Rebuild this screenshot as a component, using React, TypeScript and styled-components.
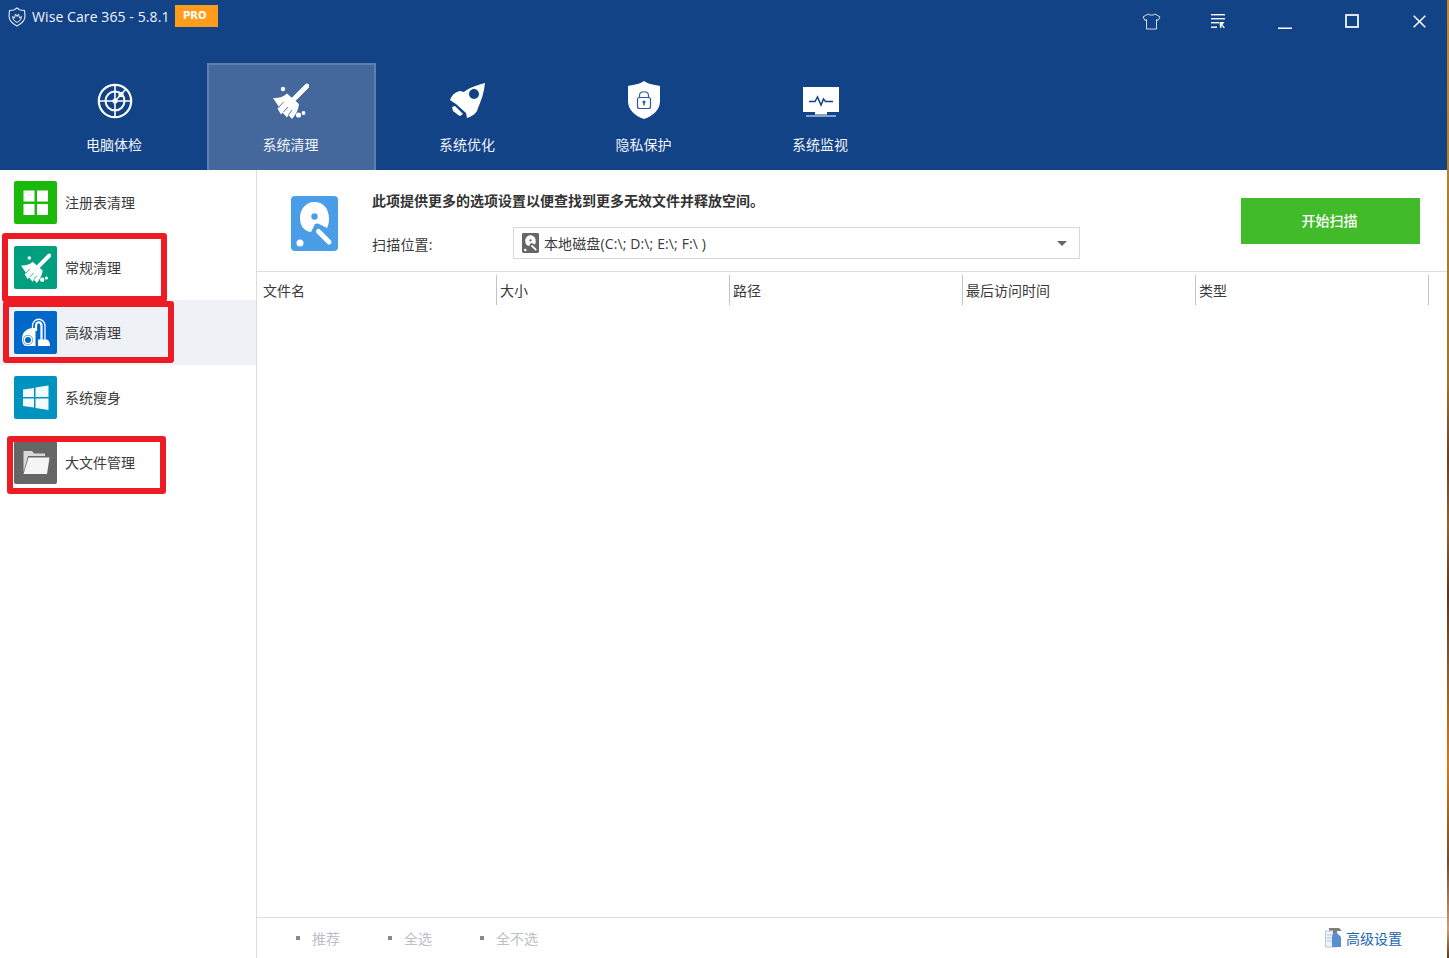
import React from "react";
import styled, { createGlobalStyle } from "styled-components";

const Global = createGlobalStyle`
  html, body { margin: 0; padding: 0; background: #fff; overflow: hidden; }
  #root { width: 1449px; height: 958px; }
  * { box-sizing: border-box; }
`;

const CJK = `"Open Sans", "Noto Sans CJK SC", sans-serif`;

const Desktop = styled.div`
  display: flex;
  width: 1449px;
  height: 958px;
  position: relative;
  font-family: ${CJK};
`;
const Wallpaper = styled.div`
  width: 2px;
  height: 958px;
  background: linear-gradient(180deg, #c08a2c 0%, #a5702a 40%, #6a3d24 48%, #9a6028 55%, #5a3322 62%, #8f5a26 70%, #d17c1e 80%, #7a4a22 90%, #d09a78 97%, #5a3a1e 100%);
`;
const Win = styled.div`
  width: 1447px;
  height: 958px;
  display: flex;
  flex-direction: column;
`;
const Header = styled.header`
  height: 170px;
  background: #134387;
  display: flex;
  flex-direction: column;
`;
const TitleBar = styled.div`
  height: 63px;
  display: flex;
  align-items: flex-start;
  justify-content: space-between;
  padding: 5px 18px 0 8px;
`;
const TitleLeft = styled.div`
  display: flex;
  align-items: flex-start;
`;
const LogoWrap = styled.div`
  padding-top: 2px;
  display: flex;
`;
const AppName = styled.span`
  color: #f1f4f9;
  font-size: 14px;
  line-height: 22px;
  padding-top: 1px;
  margin-left: 6px;
  width: 138px;
  white-space: nowrap;
  letter-spacing: 0.09px;
`;
const Pro = styled.span`
  width: 43px;
  height: 22px;
  margin-left: 5px;
  background: #ff9c1a;
  color: #fff;
  font-family: "DejaVu Sans", sans-serif;
  font-size: 10px;
  font-weight: 700;
  line-height: 22px;
  padding-left: 8px;
`;
const WinControls = styled.div`
  display: flex;
  gap: 47px;
  padding-top: 6px;
`;
const WinButton = styled.div`
  width: 20px;
  height: 20px;
  display: flex;
  align-items: center;
  justify-content: center;
`;
const Tabs = styled.nav`
  display: flex;
  gap: 7.5px;
  padding-left: 30px;
  height: 107px;
`;
const Tab = styled.div<{ $active?: boolean }>`
  width: 169px;
  height: 107px;
  display: flex;
  flex-direction: column;
  align-items: center;
  border: 2px solid ${(p) => (p.$active ? "#6080ac" : "transparent")};
  border-bottom: 0;
  background: ${(p) => (p.$active ? "#44689c" : "transparent")};
`;
const TabIcon = styled.div`
  height: 54px;
  width: 100%;
  display: flex;
  align-items: flex-end;
  justify-content: center;
`;
const TabLabel = styled.span`
  margin-top: 16px;
  margin-right: 1px;
  color: #f1f4f9;
  font-size: 14px;
  line-height: 20px;
`;
const Body = styled.div`
  flex: 1;
  display: flex;
  min-height: 0;
`;
const Side = styled.aside`
  width: 257px;
  border-right: 1px solid #dcdcdc;
  display: flex;
  flex-direction: column;
`;
const SideRow = styled.div<{ $active?: boolean }>`
  height: 65px;
  display: flex;
  align-items: center;
  padding-left: 14px;
  gap: 8px;
  background: ${(p) => (p.$active ? "#eef1f6" : "transparent")};
`;
const SideIcon = styled.div<{ $bg: string }>`
  width: 43px;
  height: 43px;
  border-radius: 2px;
  background: ${(p) => p.$bg};
  display: flex;
  align-items: center;
  justify-content: center;
`;
const SideLabel = styled.span`
  font-size: 14px;
  color: #3a3a3a;
  line-height: 20px;
`;
const Mark = styled.div<{ $x: number; $y: number; $w: number; $h: number }>`
  position: absolute;
  left: ${(p) => p.$x}px;
  top: ${(p) => p.$y}px;
  width: ${(p) => p.$w}px;
  height: ${(p) => p.$h}px;
  border: 6px solid #ed1c24;
  border-radius: 3px;
`;
const Main = styled.main`
  flex: 1;
  display: flex;
  flex-direction: column;
  min-width: 0;
`;
const Info = styled.section`
  height: 102px;
  border-bottom: 1px solid #dddddd;
  display: flex;
  padding: 26px 27px 0 34px;
`;
const InfoIcon = styled.div`
  width: 47px;
  height: 56px;
  margin-right: 34px;
`;
const InfoBody = styled.div`
  width: 708px;
  margin-top: -5px;
`;
const InfoText = styled.div`
  font-size: 14px;
  line-height: 20px;
  font-weight: 700;
  color: #333;
  height: 36px;
`;
const ScanRow = styled.div`
  display: flex;
  align-items: center;
`;
const ScanLabel = styled.span`
  width: 141px;
  font-size: 14px;
  color: #3a3a3a;
  line-height: 20px;
  padding-top: 3px;
  letter-spacing: 0.2px;
`;
const Select = styled.div`
  width: 567px;
  height: 32px;
  border: 1px solid #d8d8d8;
  display: flex;
  align-items: center;
  padding: 0 12px 0 8px;
  gap: 5px;
`;
const SelectText = styled.span`
  flex: 1;
  font-size: 14px;
  color: #3a3a3a;
  letter-spacing: 0.12px;
  white-space: nowrap;
`;
const Caret = styled.span`
  width: 0;
  height: 0;
  border-left: 5.5px solid transparent;
  border-right: 5.5px solid transparent;
  border-top: 5px solid #666;
  margin-right: 0.5px;
`;
const ScanButton = styled.div`
  width: 179px;
  height: 46px;
  margin-left: auto;
  margin-top: 2px;
  padding: 0 2px 2px 0;
  background: #42bb2b;
  color: #fff;
  font-size: 14px;
  font-weight: 500;
  display: flex;
  align-items: center;
  justify-content: center;
`;
const TableHead = styled.div`
  display: grid;
  grid-template-columns: 239.5px repeat(4, 233px);
  padding-top: 3px;
  height: 33px;
`;
const HeadCell = styled.div`
  border-right: 1px solid #c4c4c4;
  height: 30px;
  padding-left: 6px;
  font-size: 14px;
  line-height: 31px;
  color: #3a3a3a;
  & + & { padding-left: 3.5px; }
`;
const TableArea = styled.div`
  flex: 1;
`;
const Footer = styled.footer`
  height: 41px;
  border-top: 1px solid #dddddd;
  display: flex;
  align-items: center;
  padding: 0 45px 1px 39px;
`;
const FootItem = styled.div`
  width: 92px;
  display: flex;
  align-items: center;
  gap: 12px;
  font-size: 14px;
  color: #bcc0c6;
  white-space: nowrap;
  &::before {
    content: "";
    width: 4px;
    height: 4px;
    background: #8a8a8a;
  }
`;
const Settings = styled.div`
  margin-left: auto;
  display: flex;
  align-items: center;
  gap: 3px;
  font-size: 14px;
  color: #1b66b3;
`;

const Broom = ({ size, bg }: { size: number; bg: string }) => (
  <svg width={size} height={size} viewBox="0 0 36 36" fill="#fff">
    <path d="M34 3 L21 16" stroke="#fff" strokeWidth="4.8" strokeLinecap="round" />
    <path d="M14 10.5 L26 21 C25.5 27 22.5 32 19 36 L15.5 32 L14 34.5 L9.5 29.5 L8 31.500 L4.500 25.500 L6 24 L0 15 C5 15.500 10.500 14 14 10.500Z" />
    <path d="M10.500 19L6 24M15 24L10.500 29M19 27L15.500 32" stroke={bg} strokeWidth="0.9" fill="none" />
    <circle cx="10" cy="6" r="2.200" />
    <circle cx="25.500" cy="32" r="2.600" />
    <circle cx="30.500" cy="30" r="1.900" />
  </svg>
);

const Radar = () => (
  <svg width="36" height="36" viewBox="0 0 36 36" fill="none" stroke="#fff">
    <circle cx="18" cy="18" r="16.200" strokeWidth="2.200" />
    <circle cx="18" cy="18" r="9.500" strokeWidth="2" />
    <path d="M18 1.500V34.500M1.500 18H34.500" strokeWidth="1.600" />
    <path d="M19 17L29 6" strokeWidth="1.600" />
    <circle cx="18" cy="18" r="2.600" fill="#fff" stroke="none" />
    <circle cx="24" cy="11.500" r="2.600" fill="#fff" stroke="none" />
  </svg>
);

const Rocket = () => (
  <svg width="35" height="35" viewBox="0 1 35 35" style={{ overflow: "visible" }}>
    <path fill="#fff" d="M35 0C28 2 20 4 14 9L10 8C5 9 2 12 0 17L6 21L16 30L17 35C23 33 27 30 28 25C31 18 34 10 35 0Z" />
    <path fill="#fff" d="M2 24L5 23L13 31L10 33L8 32L7 31L3 28Z" />
    <circle cx="24" cy="11" r="5" fill="#134387" />
  </svg>
);

const Shield = () => (
  <svg width="32" height="38" viewBox="0 0 32 38">
    <path fill="#fff" d="M16 0C20 3 27 4 32 5L32 20C32 29 25 35 16 38C7 35 0 29 0 20L0 5C5 4 12 3 16 0Z" />
    <rect x="9.500" y="16.500" width="13" height="11" rx="2" fill="none" stroke="#2f5c9c" strokeWidth="1.200" />
    <path d="M11.500 16.500V14.500C11.500 9.500 20.500 9.500 20.500 14.500V16.500" fill="none" stroke="#2f5c9c" strokeWidth="1.200" />
    <circle cx="16" cy="21" r="1.500" fill="#2f5c9c" />
    <rect x="15.300" y="21" width="1.400" height="3.500" fill="#2f5c9c" />
  </svg>
);

const Monitor = () => (
  <svg width="36" height="32" viewBox="0 0 36 32">
    <rect width="36" height="25" fill="#fff" />
    <rect x="12" y="25" width="12" height="2.500" fill="#fff" />
    <rect x="3" y="28.500" width="30" height="1" fill="#fff" />
    <path d="M6 14.500H12L14.500 10L18 18L20.500 12L22.500 14.500H30" fill="none" stroke="#134387" strokeWidth="1.500" />
  </svg>
);

const Logo = () => (
  <svg width="18" height="20" viewBox="0 0 18 20" fill="none" stroke="#e8edf5" strokeWidth="1.100">
    <path d="M9 1L12 3L16.500 3.500L17 9C17 14 13 17 9 19C5 17 1 14 1 9L1.500 3.500L6 3Z" />
    <path d="M4.500 9.500L5.500 13L9 15.500L12.500 13L13.500 9.500L11.500 11L10.500 7L9 9.500L7.500 7L6.500 11Z" strokeWidth="1" />
  </svg>
);

const Shirt = () => (
  <svg width="19" height="17" viewBox="0 0 19 17" fill="none" stroke="#e8edf5" strokeWidth="0.900">
    <path d="M6 1C7 2.500 12 2.500 13 1L18 4L16 7.500L14.500 6.500V16H4.500V6.500L3 7.500L1 4Z" />
  </svg>
);

const ListMenu = () => (
  <svg width="14" height="15" viewBox="0 0 14 15" fill="#fff">
    <rect width="14" height="1.400" />
    <rect y="4" width="14" height="1.400" />
    <rect y="8" width="8" height="1.400" />
    <rect y="12.500" width="6" height="1.400" />
    <path d="M8.500 8H13.500L11.500 10.500L14 14H12.500L10.500 11V14H9Z" />
  </svg>
);

const Minimize = () => (
  <svg width="14" height="20" viewBox="0 0 14 20"><rect y="16.500" width="14" height="1.500" fill="#fff" /></svg>
);
const Maximize = () => (
  <svg width="14" height="14" viewBox="0 0 14 14" fill="none" stroke="#fff" strokeWidth="1.700"><rect x="1" y="1" width="12" height="12" /></svg>
);
const Close = () => (
  <svg width="13" height="13" viewBox="0 0 13 13" fill="none" stroke="#fff" strokeWidth="1.500"><path d="M.7.7L12.300 12.300M12.300.7L.7 12.300" /></svg>
);

const Tiles = () => (
  <svg width="43" height="43" viewBox="0 0 43 43" fill="#fff">
    <rect x="9.500" y="9.500" width="11" height="11" />
    <rect x="23" y="9.500" width="11" height="11" />
    <rect x="9.500" y="23" width="11" height="11" />
    <rect x="23" y="23" width="11" height="11" />
  </svg>
);
const Vacuum = () => (
  <svg width="43" height="43" viewBox="0 0 43 43" fill="none">
    <path fill="#fff" d="M8 28C8 21 13 17 19 17H21.500V35H12C9.500 35 8 32 8 28Z" />
    <circle cx="14" cy="29" r="5" fill="#0068c8" />
    <circle cx="14" cy="29" r="3.800" fill="none" stroke="#fff" strokeWidth="1.600" />
    <path d="M18.500 18V15C18.500 6 31 6 31 15V30" stroke="#fff" strokeWidth="1.300" />
    <path d="M22 20V15C22 10 27.500 10 27.500 15V30" stroke="#fff" strokeWidth="2.200" />
    <path fill="#fff" d="M24 28.500H32C34.500 28.500 36 31 36 35H24Z" />
  </svg>
);
const WinLogo = () => (
  <svg width="43" height="43" viewBox="0 0 43 43" fill="#f2fafd">
    <path d="M9 13.500L20 12V21H9Z" />
    <path d="M21.500 11.500L34.500 9.500V21H21.500Z" />
    <path d="M9 22.500H20V31.500L9 30Z" />
    <path d="M21.500 22.500H34.500V34L21.500 32Z" />
  </svg>
);
const Folder = () => (
  <svg width="43" height="43" viewBox="0 0 43 43">
    <path fill="#d9d9d9" d="M9.500 31V10H18L20 12.500H31V15H14L9.500 31Z" />
    <path fill="#f5f5f5" d="M14.500 16.500H35.500L33 33H9.500Z" />
  </svg>
);
const DiskSvg = styled.svg`
  display: block;
  flex: none;
`;
const Disk = ({ size, bg }: { size: number; bg: string }) => (
  <DiskSvg width={size} height={(size * 55) / 47} viewBox="0 0 47 55">
    <rect width="47" height="55" rx="4" fill={bg} />
    <path fill="#fff" d="M23 6C32 6 38 12 38 23C38 27 37 30 36 32L28 28C26 27 24 27.500 23 30L20 36C13 35 9 30 9 22C9 13 15 6 23 6Z" />
    <circle cx="23.500" cy="20.500" r="3.200" fill={bg} />
    <path d="M26 34.500L39 47" stroke={bg} strokeWidth="9" strokeLinecap="round" />
    <path d="M27.500 35.500L38 46" stroke="#fff" strokeWidth="5" strokeLinecap="round" />
    <circle cx="9" cy="47" r="3.500" fill="#fff" />
  </DiskSvg>
);
const SprayIcon = () => (
  <svg width="18" height="20" viewBox="0 0 18 20">
    <rect x="0.500" y="3" width="11" height="16" fill="#eef3fa" stroke="#b7c7dc" />
    <path d="M2 7H8M2 10H7M2 13H7" stroke="#b7c7dc" />
    <path fill="#7d7d7d" d="M4 0H14L17 3H12V5H8V2.500H4Z" />
    <path fill="#5b8fcb" d="M8 5H12L16 9V19H7V9Z" />
  </svg>
);

const tabs: { label: string; icon: React.ReactNode; active?: boolean }[] = [
  { label: "电脑体检", icon: <Radar /> },
  { label: "系统清理", icon: <Broom size={36} bg="#44689c" />, active: true },
  { label: "系统优化", icon: <Rocket /> },
  { label: "隐私保护", icon: <Shield /> },
  { label: "系统监视", icon: <Monitor /> },
];

const rows: { label: string; bg: string; icon: React.ReactNode; active?: boolean }[] = [
  { label: "注册表清理", bg: "#1cb90d", icon: <Tiles /> },
  { label: "常规清理", bg: "#009f7f", icon: <Broom size={30} bg="#009f7f" /> },
  { label: "高级清理", bg: "#0068c8", icon: <Vacuum />, active: true },
  { label: "系统瘦身", bg: "#0093c0", icon: <WinLogo /> },
  { label: "大文件管理", bg: "#666666", icon: <Folder /> },
];

const columns = ["文件名", "大小", "路径", "最后访问时间", "类型"];
const marks = [
  { x: 2, y: 233, w: 165, h: 69 },
  { x: 3, y: 301, w: 171, h: 62 },
  { x: 7, y: 436, w: 159, h: 58 },
];

export default function App() {
  return (
    <Desktop>
      <Global />
      <Win>
        <Header>
          <TitleBar>
            <TitleLeft>
              <LogoWrap><Logo /></LogoWrap>
              <AppName>Wise Care 365 - 5.8.1</AppName>
              <Pro>PRO</Pro>
            </TitleLeft>
            <WinControls>
              <WinButton><Shirt /></WinButton>
              <WinButton><ListMenu /></WinButton>
              <WinButton><Minimize /></WinButton>
              <WinButton><Maximize /></WinButton>
              <WinButton><Close /></WinButton>
            </WinControls>
          </TitleBar>
          <Tabs>
            {tabs.map((t) => (
              <Tab key={t.label} $active={t.active}>
                <TabIcon>{t.icon}</TabIcon>
                <TabLabel>{t.label}</TabLabel>
              </Tab>
            ))}
          </Tabs>
        </Header>
        <Body>
          <Side>
            {rows.map((r) => (
              <SideRow key={r.label} $active={r.active}>
                <SideIcon $bg={r.bg}>{r.icon}</SideIcon>
                <SideLabel>{r.label}</SideLabel>
              </SideRow>
            ))}
          </Side>
          <Main>
            <Info>
              <InfoIcon><Disk size={47} bg="#4a9ee8" /></InfoIcon>
              <InfoBody>
                <InfoText>此项提供更多的选项设置以便查找到更多无效文件并释放空间。</InfoText>
                <ScanRow>
                  <ScanLabel>扫描位置:</ScanLabel>
                  <Select>
                    <Disk size={17} bg="#666" />
                    <SelectText>本地磁盘(C:\; D:\; E:\; F:\ )</SelectText>
                    <Caret />
                  </Select>
                </ScanRow>
              </InfoBody>
              <ScanButton>开始扫描</ScanButton>
            </Info>
            <TableHead>
              {columns.map((c) => (
                <HeadCell key={c}>{c}</HeadCell>
              ))}
            </TableHead>
            <TableArea />
            <Footer>
              <FootItem>推荐</FootItem>
              <FootItem>全选</FootItem>
              <FootItem>全不选</FootItem>
              <Settings>
                <SprayIcon />
                高级设置
              </Settings>
            </Footer>
          </Main>
        </Body>
      </Win>
      <Wallpaper />
      {marks.map((m) => (
        <Mark key={m.y} $x={m.x} $y={m.y} $w={m.w} $h={m.h} />
      ))}
    </Desktop>
  );
}
